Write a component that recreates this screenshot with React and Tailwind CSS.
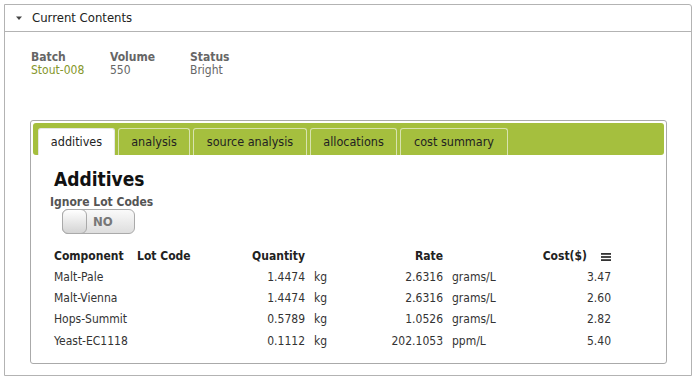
import React from "react";

const rows = [
  { name: "Malt-Pale", qty: "1.4474", qtyUnit: "kg", rate: "2.6316", rateUnit: "grams/L", cost: "3.47" },
  { name: "Malt-Vienna", qty: "1.4474", qtyUnit: "kg", rate: "2.6316", rateUnit: "grams/L", cost: "2.60" },
  { name: "Hops-Summit", qty: "0.5789", qtyUnit: "kg", rate: "1.0526", rateUnit: "grams/L", cost: "2.82" },
  { name: "Yeast-EC1118", qty: "0.1112", qtyUnit: "kg", rate: "202.1053", rateUnit: "ppm/L", cost: "5.40" },
];

const tabs = [
  { label: "additives", w: "w-[77px]" },
  { label: "analysis", w: "w-[72px]" },
  { label: "source analysis", w: "w-[114px]" },
  { label: "allocations", w: "w-[87px]" },
  { label: "cost summary", w: "w-[108px]" },
];

const cols = "grid grid-cols-[83px_92px_76px_54px_84px_76px_92px]";

export default function App() {
  return (
    <div
      className="w-[697px] h-[378px] bg-white pt-[4px] pl-[4px]"
      style={{ fontFamily: '"DejaVu Sans Condensed", "DejaVu Sans", sans-serif' }}
    >
      <div className="w-[688px] h-[372px] border border-[#b3b3b3] rounded-tr-[3px] flex flex-col">
        {/* header */}
        <div className="h-[27px] border-b border-[#b3b3b3] flex items-center pl-[11px]">
          <svg width="7" height="5" viewBox="0 0 7 5" className="mr-[9px]">
            <path d="M0 0.5 L6 0.5 L3 4 Z" fill="#444" />
          </svg>
          <span className="text-[13px] text-[#222]">Current Contents</span>
        </div>

        {/* batch info */}
        <div className="flex pl-[26px] pt-[19px] text-[12px] leading-[13px]">
          <div className="w-[79px]">
            <div className="font-bold text-[#666]">Batch</div>
            <div className="text-[#85962a]">Stout-008</div>
          </div>
          <div className="w-[80px]">
            <div className="font-bold text-[#666]">Volume</div>
            <div className="text-[#666]">550</div>
          </div>
          <div>
            <div className="font-bold text-[#666]">Status</div>
            <div className="text-[#666]">Bright</div>
          </div>
        </div>

        {/* tabs container */}
        <div className="ml-[25px] mt-[43px] w-[637px] h-[244px] border border-[#aaa] rounded-[3px] p-[2px]">
          <div className="h-[32px] bg-[#a5bf3e] rounded-[3px] flex items-end pl-[5px] gap-[3px]">
            {tabs.map((t, i) => (
              <div
                key={t.label}
                className={
                  t.w +
                  " h-[27px] rounded-t-[3px] border border-b-0 flex items-center justify-center text-[12.5px] text-[#222] " +
                  (i === 0 ? "bg-white border-[#e6e6e6]" : "bg-[#a5bf3e] border-[#d8e3b0]")
                }
              >
                {t.label}
              </div>
            ))}
          </div>

          <div className="pl-[21px]">
            <div className="text-[19px] font-bold text-[#111] leading-[22px] mt-[13px]">Additives</div>
            <div className="text-[12px] font-bold text-[#555] leading-[13px] mt-[6px] -ml-[4px]">Ignore Lot Codes</div>
            <div className="ml-[8px] mt-[0px] w-[73px] h-[25px] rounded-[6px] border border-[#aaa] bg-gradient-to-b from-[#fafafa] to-[#dedede] flex items-center relative">
              <div className="absolute left-[-1px] top-[-1px] w-[25px] h-[25px] rounded-[6px] border border-[#aaa] bg-gradient-to-b from-[#ffffff] to-[#d4d4d4]" />
              <span className="ml-[30px] text-[13px] font-bold text-[#777]">NO</span>
            </div>

            {/* table */}
            <div className="mt-[11px] text-[12px] text-[#333]">
              <div className={cols + " h-[21px] items-center font-bold text-[#222]"}>
                <div>Component</div>
                <div>Lot Code</div>
                <div className="text-right">Quantity</div>
                <div />
                <div className="text-right">Rate</div>
                <div />
                <div className="flex justify-end items-center">
                  Cost($)
                  <svg width="10" height="8" viewBox="0 0 10 8" className="ml-[14px] mt-[2px]">
                    <rect x="0" y="0" width="10" height="1.8" fill="#333" />
                    <rect x="0" y="3.1" width="10" height="1.8" fill="#333" />
                    <rect x="0" y="6.2" width="10" height="1.8" fill="#333" />
                  </svg>
                </div>
              </div>
              {rows.map((r) => (
                <div key={r.name} className={cols + " h-[21.3px] items-center"}>
                  <div>{r.name}</div>
                  <div />
                  <div className="text-right">{r.qty}</div>
                  <div className="pl-[9px]">{r.qtyUnit}</div>
                  <div className="text-right">{r.rate}</div>
                  <div className="pl-[9px]">{r.rateUnit}</div>
                  <div className="text-right">{r.cost}</div>
                </div>
              ))}
            </div>
          </div>
        </div>
      </div>
    </div>
  );
}
